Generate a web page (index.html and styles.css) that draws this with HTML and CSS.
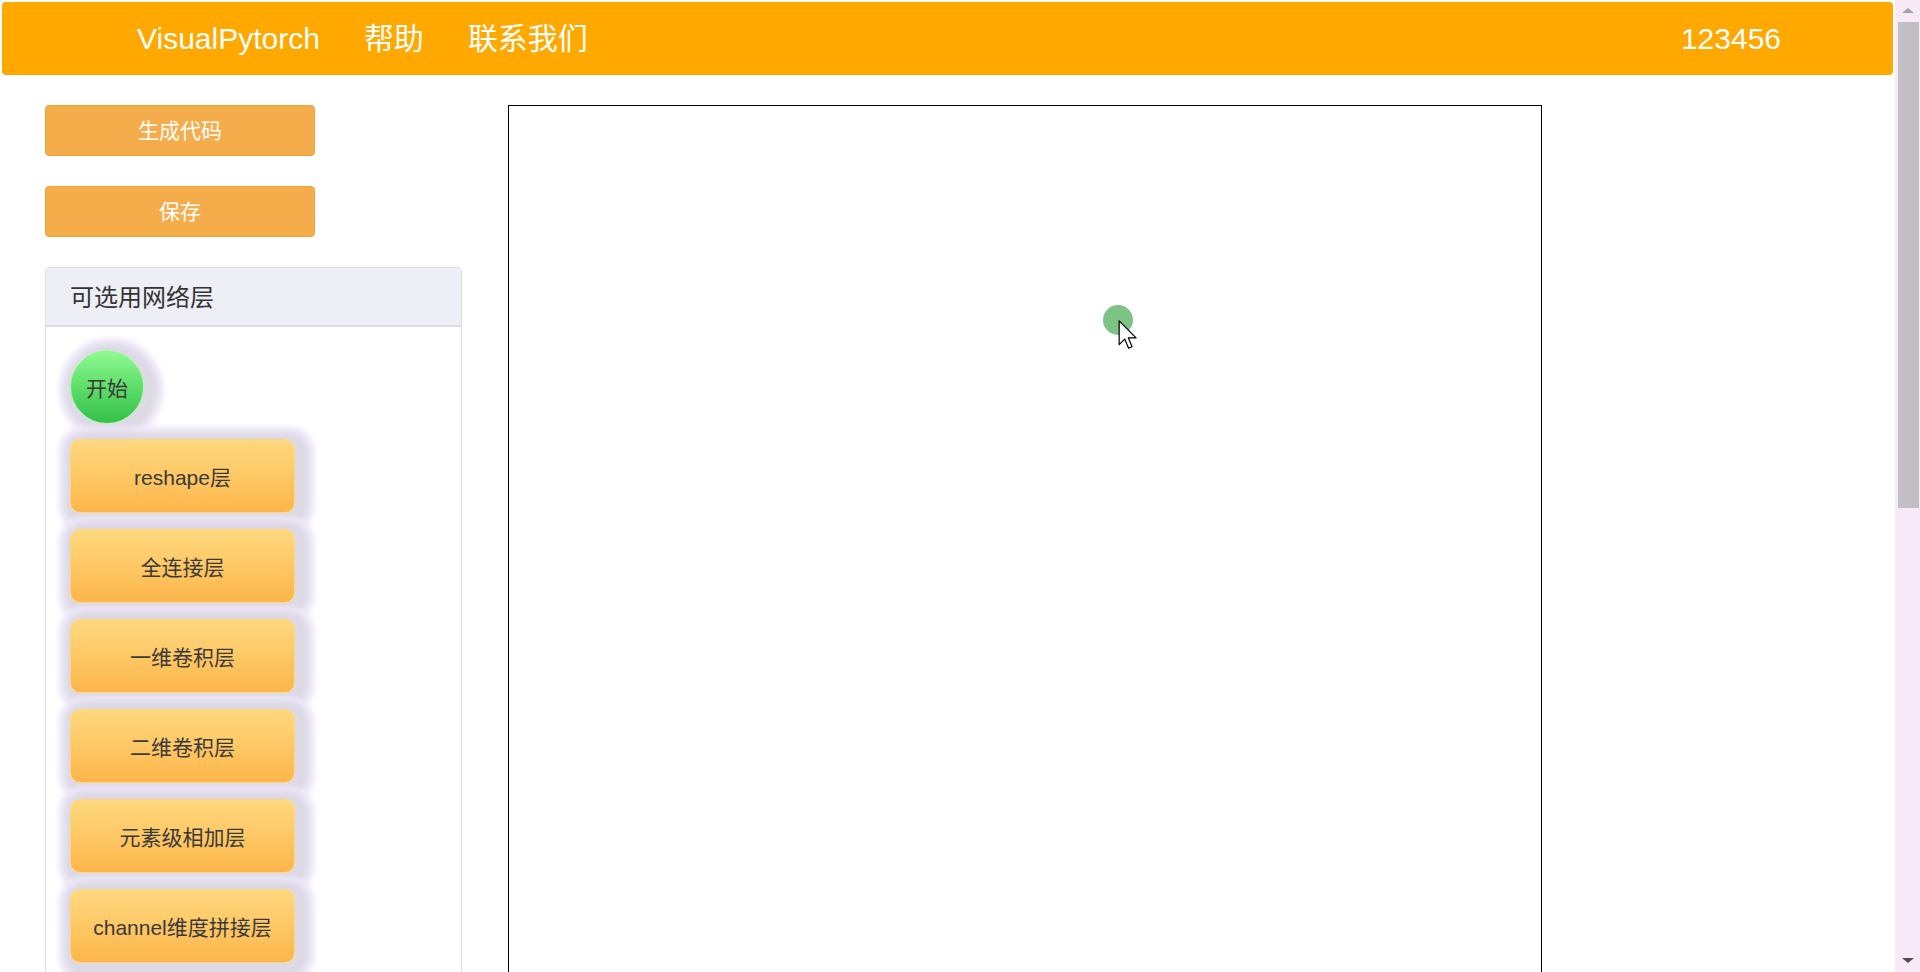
FILE: index.html
```html
<!DOCTYPE html>
<html lang="zh">
<head>
<meta charset="utf-8">
<title>VisualPytorch</title>
<link rel="stylesheet" href="styles.css">
</head>
<body>
<nav class="navbar">
  <div class="nav-left">
    <span class="brand">VisualPytorch</span>
    <span class="nav-link">帮助</span>
    <span class="nav-link">联系我们</span>
  </div>
  <span class="user">123456</span>
</nav>
<main class="main">
  <aside class="sidebar">
    <button class="btn">生成代码</button>
    <button class="btn">保存</button>
    <section class="panel">
      <div class="panel-head">可选用网络层</div>
      <div class="panel-body">
        <div class="start">开始</div>
        <div class="layer">reshape层</div>
        <div class="layer">全连接层</div>
        <div class="layer">一维卷积层</div>
        <div class="layer">二维卷积层</div>
        <div class="layer">元素级相加层</div>
        <div class="layer">channel维度拼接层</div>
      </div>
    </section>
  </aside>
  <section class="canvas">
    <div class="dot"></div>
    <svg class="cursor" width="20" height="30" viewBox="0 0 13 20"><path d="M0.6 0.6 V16.4 L4.3 12.7 L6.9 18.8 L9.2 17.8 L6.7 11.9 H11.9 Z" fill="#fff" stroke="#000" stroke-width="0.8" stroke-linejoin="round"/></svg>
  </section>
</main>
<div class="scrollbar">
  <span class="arrow arrow-up"></span>
  <span class="thumb"></span>
  <span class="arrow arrow-down"></span>
</div>
</body>
</html>
```
FILE: styles.css
```css
html, body {
  margin: 0;
  padding: 0;
}
html {
  scrollbar-width: none;
}
::-webkit-scrollbar {
  display: none;
}
body {
  font-family: "Liberation Sans", "Noto Sans CJK SC", sans-serif;
  color: #333;
  background: #fff;
  padding-right: 25px;
}
.scrollbar {
  position: fixed;
  top: 0;
  right: 0;
  width: 25px;
  height: 100vh;
  background: #f7e9f7;
  display: flex;
  flex-direction: column;
  align-items: center;
}
.arrow {
  display: block;
  width: 0;
  height: 0;
  border-left: 6px solid transparent;
  border-right: 6px solid transparent;
}
.arrow-up {
  margin-top: 8px;
  border-bottom: 5px solid #a3a3a3;
}
.arrow-down {
  margin-top: auto;
  margin-bottom: 9px;
  border-top: 5px solid #505050;
}
.thumb {
  display: block;
  width: 21px;
  height: 486px;
  margin-top: 9px;
  margin-left: 2px;
  background: #c2bfc4;
}
.navbar {
  margin: 2px;
  height: 73px;
  background: #ffa800;
  border-radius: 4px;
  display: flex;
  align-items: center;
  justify-content: space-between;
  padding: 0 112px 0 135px;
  color: #fff;
  font-size: 30px;
  line-height: 1;
}
.nav-left {
  display: flex;
  align-items: baseline;
  gap: 44px;
}
.main {
  display: flex;
  align-items: flex-start;
  gap: 46px;
  padding: 28px 0 30px 45px;
}
.sidebar {
  width: 417px;
  display: flex;
  flex-direction: column;
  gap: 30px;
}
.btn {
  width: 270px;
  height: 51px;
  background: #f5ad4b;
  border: 1px solid #eea236;
  border-radius: 4px;
  color: #fff;
  font-family: inherit;
  font-size: 21px;
  padding: 0 0 4px 0;
}
.panel {
  border: 1px solid #ddd;
  border-radius: 4px;
  background: #fff;
}
.panel-head {
  height: 59px;
  box-sizing: border-box;
  padding: 0 0 2px 24px;
  display: flex;
  align-items: center;
  background: #eeeef6;
  border-bottom: 2px solid #dcdce0;
  border-radius: 4px 4px 0 0;
  font-size: 24px;
  color: #333;
}
.panel-body {
  padding: 23px 24px 30px 24px;
  display: flex;
  flex-direction: column;
  align-items: flex-start;
  gap: 16px;
}
.start {
  width: 74px;
  height: 74px;
  box-sizing: border-box;
  border-radius: 50%;
  border: 1px solid #a4f3a4;
  background: linear-gradient(#8ffb92, #5fdd6a 50%, #33c048);
  display: flex;
  align-items: center;
  justify-content: center;
  font-size: 21px;
  color: #3a3a3a;
  box-shadow: 4px 3px 6px 10px rgba(200, 198, 208, 0.5), 4px 3px 4px 16px rgba(240, 234, 250, 0.85);
  margin-bottom: -1px;
}
.layer {
  width: 225px;
  height: 74px;
  box-sizing: border-box;
  border-radius: 10px;
  border: 1px solid #ffd680;
  background: linear-gradient(#fed87f, #fec865 50%, #fdb54a);
  display: flex;
  align-items: center;
  justify-content: center;
  font-size: 21px;
  color: #3a3a3a;
  box-shadow: 4px 3px 6px 10px rgba(200, 198, 208, 0.5), 4px 3px 4px 16px rgba(240, 234, 250, 0.85);
}
.canvas {
  position: relative;
  width: 1034px;
  height: 1740px;
  box-sizing: border-box;
  border: 1px solid #000;
  background: #fff;
}
.dot {
  position: absolute;
  left: 594px;
  top: 199px;
  width: 30px;
  height: 30px;
  border-radius: 50%;
  background: #7dc383;
}
.cursor {
  position: absolute;
  left: 609px;
  top: 214px;
}
```
